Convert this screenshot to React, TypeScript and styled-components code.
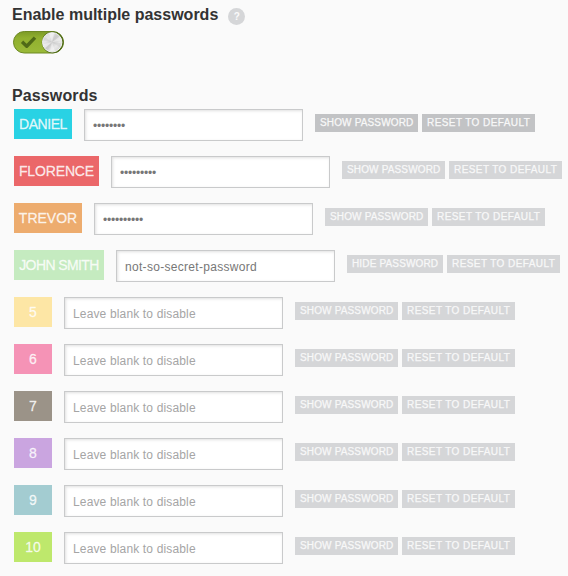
import React from "react";
import styled, { createGlobalStyle } from "styled-components";

const GlobalStyle = createGlobalStyle`
  * { box-sizing: border-box; }
  body {
    margin: 0;
    background: #fafafa;
    font-family: "Liberation Sans", Arial, sans-serif;
    overflow: hidden;
  }
`;

const Page = styled.main`
  width: 568px;
  height: 576px;
  padding: 5px 0 0 12px;
  overflow: hidden;
`;

const Heading = styled.h2`
  margin: 0;
  height: 20px;
  font-size: 16px;
  line-height: 20px;
  font-weight: bold;
  color: #333;
  white-space: nowrap;
`;

const SectionHeading = styled(Heading)`
  letter-spacing: 0.12px;
`;

const HeadingRow = styled.div`
  display: flex;
  gap: 10px;
  height: 26px;
`;

const Help = styled.span`
  width: 17px;
  height: 17px;
  margin-top: 3px;
  border-radius: 50%;
  background: #d5d6d8;
  color: #fafafa;
  font-size: 10px;
  font-weight: bold;
  line-height: 17px;
  text-align: center;
`;

const ToggleIcon = styled.svg`
  display: block;
  width: 54px;
  height: 24px;
  margin-bottom: 31px;
`;

const Rows = styled.div`
  display: flex;
  flex-direction: column;
  gap: 15px;
  padding: 3px 0 0 2px;
`;

const Row = styled.div`
  display: flex;
  align-items: flex-start;
  height: 32px;
`;

const Label = styled.div<{ $color: string; $width: number; $tracking: number }>`
  display: flex;
  justify-content: center;
  flex: none;
  width: ${(p) => p.$width}px;
  height: 30px;
  background: ${(p) => p.$color};
  color: rgba(255, 255, 255, 0.84);
  font-size: 14px;
  line-height: 30px;
  letter-spacing: ${(p) => p.$tracking}px;
  -webkit-text-stroke: 0.3px rgba(255, 255, 255, 0.7);
  white-space: nowrap;
`;

const Field = styled.input<{ $tracking: number }>`
  flex: none;
  width: 219px;
  height: 32px;
  margin: 0 12px;
  padding: 2px 8px 0;
  border: 1px solid #c9cacb;
  border-radius: 0;
  background: #fff;
  box-shadow: inset 1px 1px 3px rgba(0, 0, 0, 0.12);
  color: #777;
  font: 12px "Liberation Sans", Arial, sans-serif;
  letter-spacing: ${(p) => p.$tracking}px;
  outline: none;
  &::placeholder { color: #a5a5a5; opacity: 1; }
`;

const Action = styled.button<{ $width: number; $strong: boolean; $tracking: number }>`
  flex: none;
  width: ${(p) => p.$width}px;
  height: 18px;
  margin: 5px 4px 0 0;
  padding: 0 0 0 5px;
  border: 0;
  background: ${(p) => (p.$strong ? "#c2c3c5" : "#d5d6d8")};
  color: #f8f8f8;
  font: 10px/18px "Liberation Sans", Arial, sans-serif;
  letter-spacing: ${(p) => p.$tracking}px;
  -webkit-text-stroke: 0.25px #f8f8f8;
  text-align: left;
  white-space: nowrap;
`;

interface Entry {
  label: string;
  color: string;
  width: number;
  tracking?: number;
  value?: string;
  masked?: boolean;
  strong?: boolean;
  visible?: boolean;
}

const entries: Entry[] = [
  { label: "DANIEL", color: "#29d2e4", width: 58, tracking: -0.45, value: "•".repeat(8), masked: true, strong: true },
  { label: "FLORENCE", color: "#eb6769", width: 85, tracking: -0.15, value: "•".repeat(9), masked: true },
  { label: "TREVOR", color: "#edac6e", width: 68, value: "•".repeat(10), masked: true },
  { label: "JOHN SMITH", color: "#c5ebc0", width: 90, tracking: -0.6, value: "not-so-secret-password", visible: true },
  { label: "5", color: "#fde6a5", width: 38 },
  { label: "6", color: "#f593b6", width: 38 },
  { label: "7", color: "#9b9388", width: 38 },
  { label: "8", color: "#caa5e0", width: 38 },
  { label: "9", color: "#a3ccd1", width: 38 },
  { label: "10", color: "#bee86c", width: 38 },
];

const fieldTracking = (e: Entry) => (e.masked ? -0.2 : e.value ? 0.3 : 0.15);

const Toggle = () => (
  <ToggleIcon viewBox="0 0 54 24" role="img" aria-label="Enabled">
    <defs>
      <linearGradient id="track" x1="0" y1="0" x2="0" y2="1">
        <stop offset="0" stopColor="#7c9a27" />
        <stop offset="0.3" stopColor="#91b02f" />
        <stop offset="1" stopColor="#9aba38" />
      </linearGradient>
      <linearGradient id="knob" x1="0" y1="0" x2="1" y2="1">
        <stop offset="0" stopColor="#d6d6d6" />
        <stop offset="0.3" stopColor="#e6e6e6" />
        <stop offset="0.5" stopColor="#d0d0d0" />
        <stop offset="0.7" stopColor="#e8e8e8" />
        <stop offset="1" stopColor="#cccccc" />
      </linearGradient>
    </defs>
    <rect x="1.5" y="0.5" width="50" height="21.5" rx="10.75" fill="url(#track)" stroke="#6d8923" />
    <path d="M11.3 12l3.4 3.2L21.8 7.8" fill="none" stroke="#4f6a17" strokeWidth="3.4" strokeLinecap="square" strokeLinejoin="round" />
    <circle cx="40.7" cy="11.3" r="10.9" fill="#526d1b" />
    <circle cx="40.2" cy="11.3" r="9.7" fill="url(#knob)" stroke="#f1f1f1" strokeWidth="1" />
    <path d="M40 11.3L37 2h5zM40 11.3l-2 9h5zM40 11.3l8-6 1 4zM40 11.3l-9 2 2 4z" fill="#fff" opacity="0.4" />
    <path d="M40 11.3l3-9 3 2zM40 11.3l-4 8-3-2zM40 11.3l9 1-1 4zM40 11.3l-9-2 2-3z" fill="#aaa" opacity="0.2" />
  </ToggleIcon>
);

export default function App() {
  return (
    <>
      <GlobalStyle />
      <Page>
        <HeadingRow>
          <Heading>Enable multiple passwords</Heading>
          <Help>?</Help>
        </HeadingRow>
        <Toggle />
        <SectionHeading>Passwords</SectionHeading>
        <Rows>
          {entries.map((e) => (
            <Row key={e.label}>
              <Label $color={e.color} $width={e.width} $tracking={e.tracking ?? 0}>{e.label}</Label>
              <Field
                $tracking={fieldTracking(e)}
                readOnly
                value={e.value ?? ""}
                placeholder="Leave blank to disable"
                aria-label={e.label}
              />
              <Action $width={e.visible ? 96 : 103} $strong={!!e.strong} $tracking={0.15}>
                {e.visible ? "HIDE PASSWORD" : "SHOW PASSWORD"}
              </Action>
              <Action $width={113} $strong={!!e.strong} $tracking={0.42}>RESET TO DEFAULT</Action>
            </Row>
          ))}
        </Rows>
      </Page>
    </>
  );
}
